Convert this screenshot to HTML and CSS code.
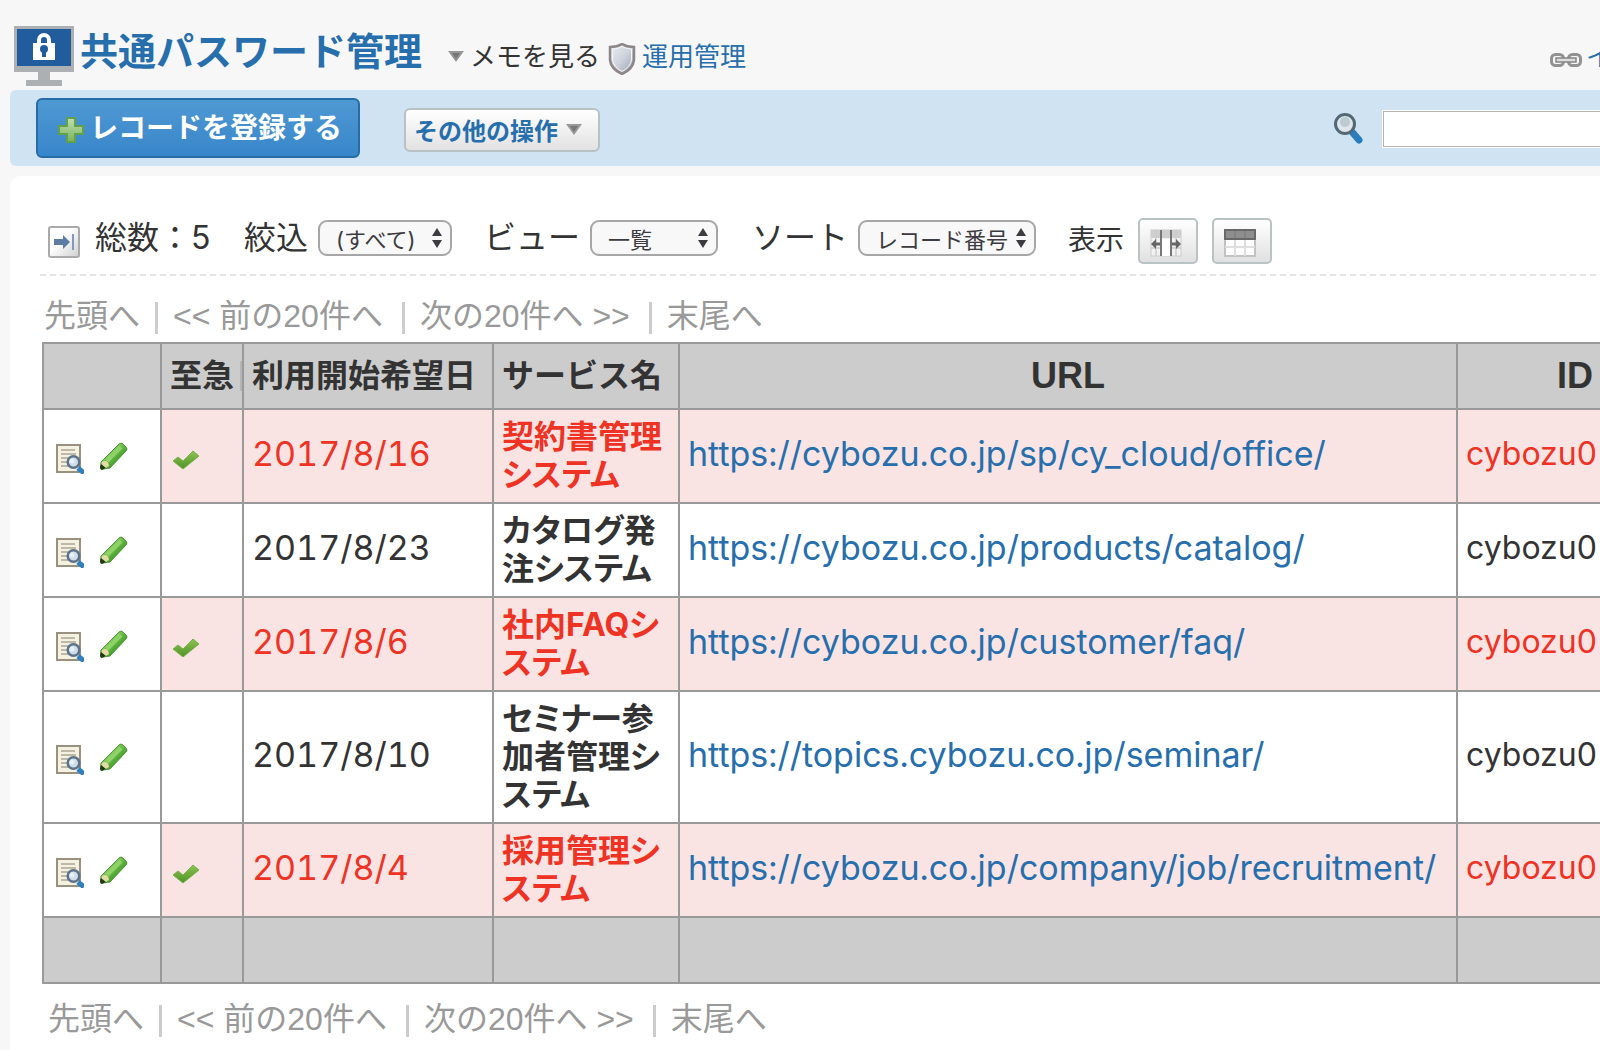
FILE: index.html
```html
<!DOCTYPE html>
<html lang="ja">
<head>
<meta charset="utf-8">
<title>共通パスワード管理</title>
<link rel="stylesheet" href="styles.css">
</head>
<body>
<svg class="defs" aria-hidden="true">
  <defs>
    <linearGradient id="g-plus" x1="0" y1="0" x2="0" y2="1"><stop offset="0" stop-color="#bfe0b0"/><stop offset="1" stop-color="#78b35c"/></linearGradient>
    <linearGradient id="g-pen" x1="0" y1="0" x2="1" y2="1"><stop offset="0.3" stop-color="#8fd465"/><stop offset="0.7" stop-color="#3c9a25"/></linearGradient>
    <linearGradient id="g-check" x1="0" y1="0" x2="0" y2="1"><stop offset="0" stop-color="#8cc152"/><stop offset="1" stop-color="#4f9426"/></linearGradient>
    <linearGradient id="g-shield" x1="0" y1="0" x2="1" y2="1"><stop offset="0" stop-color="#eceef2"/><stop offset="0.5" stop-color="#ced3dc"/><stop offset="1" stop-color="#969eac"/></linearGradient>
    <linearGradient id="g-key" x1="0" y1="0" x2="1" y2="1"><stop offset="0.4" stop-color="#ffffff"/><stop offset="1" stop-color="#cfcfcf"/></linearGradient>
  </defs>
  <symbol id="i-triangle" viewBox="0 0 16 11"><path d="M0 0H16L8 11Z" fill="#989898"/><path d="M4 2H12L8 8Z" fill="#777"/></symbol>
  <symbol id="i-updown" viewBox="0 0 10 20"><path d="M5 0L10 8H0ZM5 20L0 12H10Z" fill="#3b3b40"/></symbol>
  <symbol id="i-view" viewBox="0 0 28 30">
    <rect x="1" y="1" width="23" height="27" fill="#f5f1e1" stroke="#999080" stroke-width="2"/>
    <path d="M5 6H19M5 10H20M5 14H12M5 18H11M5 22H14" stroke="#aaa796" stroke-width="1.5"/>
    <path d="M22 24L28 29" stroke="#2f80be" stroke-width="5"/>
    <circle cx="17.500" cy="18" r="5.800" fill="#cfdcea" stroke="#5c7288" stroke-width="2.500"/>
    <circle cx="16" cy="17" r="2.500" fill="#e8f0f7"/>
  </symbol>
  <symbol id="i-pen" viewBox="0 0 28 28">
    <path d="M1 20L19 2Q21 0 23 2L26 5Q28 7 26 9L10 26L3 27Q0 26 1 20Z" fill="url(#g-pen)" stroke="#4b9a35" stroke-width="1"/>
    <path d="M7 19L21 5" stroke="#8ed268" stroke-width="4"/>
    <path d="M2 20Q8 17 9 24L4 27L1 25Z" fill="#e4dba4"/>
    <path d="M1 22L6 26L2 28Q0 28 0 25Z" fill="#1d3b12"/>
  </symbol>
  <symbol id="i-check" viewBox="0 0 28 20"><path d="M1 11L6 7L11 11L21 1L27 6L11 19Z" fill="url(#g-check)" stroke="#78b04e" stroke-width="1"/></symbol>
</svg>

<header class="header">
  <svg class="logo" viewBox="0 0 60 60" aria-hidden="true">
    <rect width="60" height="46" fill="#adb0b2"/><rect x="3" y="3" width="54" height="37" fill="#215c9c"/>
    <path d="M24 46H36V54H48V60H12V54H24Z" fill="#adb0b2"/>
    <path d="M25 18V14a5 5 0 0 1 10 0V18" fill="none" stroke="#fff" stroke-width="4"/>
    <rect x="19" y="17" width="22" height="17" fill="#fff"/>
    <circle cx="30" cy="23" r="4" fill="#215c9c"/><rect x="28" y="24" width="4" height="7" fill="#215c9c"/>
  </svg>
  <h1 class="title">共通パスワード管理</h1>
  <svg class="tri" aria-hidden="true"><use href="#i-triangle"/></svg>
  <a class="memo" href="#">メモを見る</a>
  <svg class="shield" viewBox="0 0 28 32" aria-hidden="true"><path d="M2 4Q9 4 14 1Q19 4 26 4V17Q25 26 14 31Q3 26 2 17Z" fill="url(#g-shield)" stroke="#8d8788" stroke-width="2.500"/><path d="M4.500 6Q10 6 14 3.500Q18 6 23.500 6V17Q22 24 14 28.500Q6 24 4.500 17Z" fill="none" stroke="#f4f5f7" stroke-width="1"/></svg>
  <a class="admin" href="#">運用管理</a>
  <a class="import" href="#"><svg class="chain" viewBox="0 0 32 14" aria-hidden="true"><rect x="1.500" y="1.500" width="12" height="11" rx="4" fill="none" stroke="#929292" stroke-width="3"/><rect x="18.500" y="1.500" width="12" height="11" rx="4" fill="none" stroke="#929292" stroke-width="3"/><rect x="6" y="5" width="20" height="4" fill="#ddd" stroke="#858585" stroke-width="1.500"/></svg>イ</a>
</header>

<div class="toolbar">
  <button class="add" type="button"><svg class="plus" viewBox="0 0 26 26" aria-hidden="true"><path d="M9 1H17V9H25V17H17V25H9V17H1V9H9Z" fill="url(#g-plus)" stroke="#62a04a" stroke-width="2"/></svg>レコードを登録する</button>
  <button class="other" type="button">その他の操作<svg class="tri" aria-hidden="true"><use href="#i-triangle"/></svg></button>
  <label class="search" for="q"><svg class="lens" viewBox="0 0 30 32" aria-hidden="true"><path d="M19 20L25 27" stroke="#2b7cbd" stroke-width="7" stroke-linecap="round"/><circle cx="11" cy="11" r="9.500" fill="#dfe6ea" stroke="#526876" stroke-width="3"/><circle cx="11" cy="9" r="5" fill="#bccad2"/></svg></label>
  <input class="query" id="q" type="text" aria-label="検索">
</div>

<main class="panel">
  <div class="filters">
    <svg class="collapse" viewBox="0 0 32 32" aria-hidden="true"><rect x="1" y="1" width="30" height="30" rx="2" fill="url(#g-key)" stroke="#aaa" stroke-width="2"/><path d="M6 13H15V9L22 16L15 23V19H6Z" fill="#5c7ba5"/><path d="M25 8V24" stroke="#8199ba" stroke-width="2"/></svg>
    <span class="total">総数：5</span>
    <label for="narrow">絞込</label>
    <span class="pick narrow"><select id="narrow"><option>(すべて)</option></select><svg aria-hidden="true"><use href="#i-updown"/></svg></span>
    <label for="view">ビュー</label>
    <span class="pick view"><select id="view"><option>一覧</option></select><svg aria-hidden="true"><use href="#i-updown"/></svg></span>
    <label for="sort">ソート</label>
    <span class="pick sort"><select id="sort"><option>レコード番号</option></select><svg aria-hidden="true"><use href="#i-updown"/></svg></span>
    <span class="show">表示</span>
    <button class="tool" type="button" aria-label="列幅"><svg viewBox="0 0 32 28" aria-hidden="true"><rect x="1" y="1" width="30" height="26" fill="#f2f2f2" stroke="#ccc"/><path d="M1 1H31V9H1Z" fill="#cfcfcf"/><path d="M1 19H31M6 1V27M26 1V27" stroke="#ccc" stroke-width="1.500"/><rect x="12" y="10" width="9" height="17" fill="#fff"/><path d="M11 1V27M21 1V27" stroke="#777" stroke-width="2"/><path d="M10 15H6M22 15H26" stroke="#666" stroke-width="3"/><path d="M6 10V20L1 15ZM26 10V20L31 15Z" fill="#666"/></svg></button>
    <button class="tool" type="button" aria-label="表"><svg viewBox="0 0 32 28" aria-hidden="true"><rect x="1" y="1" width="30" height="26" fill="#fff" stroke="#c2c2c2" stroke-width="2"/><path d="M11 10V27M21 10V27M1 18H31" stroke="#dedede" stroke-width="2"/><rect x="1" y="1" width="30" height="9" fill="#8e8e8e" stroke="#686868" stroke-width="2"/><path d="M11 2V9M21 2V9" stroke="#777"/></svg></button>
  </div>

  <nav class="pager"><span>先頭へ</span><span class="step">&lt;&lt; 前の20件へ</span><span class="step">次の20件へ &gt;&gt;</span><span>末尾へ</span></nav>

  <table class="records">
    <colgroup><col class="c-act"><col class="c-urg"><col class="c-date"><col class="c-name"><col class="c-url"><col class="c-id"></colgroup>
    <thead>
      <tr><th></th><th class="urgent-head">至急</th><th class="left">利用開始希望日</th><th class="left">サービス名</th><th class="latin">URL</th><th class="latin">ID</th></tr>
    </thead>
    <tbody>
      <tr class="hot">
        <td class="act"><a href="#" aria-label="詳細"><svg class="doc"><use href="#i-view"/></svg></a><a href="#" aria-label="編集"><svg class="pen"><use href="#i-pen"/></svg></a></td>
        <td><svg class="check"><use href="#i-check"/></svg></td><td class="wide">2017/8/16</td><td class="name">契約書管理システム</td>
        <td class="wide"><a href="#">https://cybozu.co.jp/sp/cy_cloud/office/</a></td><td>cybozu0</td>
      </tr>
      <tr>
        <td class="act"><a href="#" aria-label="詳細"><svg class="doc"><use href="#i-view"/></svg></a><a href="#" aria-label="編集"><svg class="pen"><use href="#i-pen"/></svg></a></td>
        <td></td><td class="wide">2017/8/23</td><td class="name">カタログ発注システム</td>
        <td class="wide"><a href="#">https://cybozu.co.jp/products/catalog/</a></td><td>cybozu0</td>
      </tr>
      <tr class="hot">
        <td class="act"><a href="#" aria-label="詳細"><svg class="doc"><use href="#i-view"/></svg></a><a href="#" aria-label="編集"><svg class="pen"><use href="#i-pen"/></svg></a></td>
        <td><svg class="check"><use href="#i-check"/></svg></td><td class="wide">2017/8/6</td><td class="name">社内FAQシステム</td>
        <td class="wide"><a href="#">https://cybozu.co.jp/customer/faq/</a></td><td>cybozu0</td>
      </tr>
      <tr>
        <td class="act"><a href="#" aria-label="詳細"><svg class="doc"><use href="#i-view"/></svg></a><a href="#" aria-label="編集"><svg class="pen"><use href="#i-pen"/></svg></a></td>
        <td></td><td class="wide">2017/8/10</td><td class="name">セミナー参加者管理システム</td>
        <td class="wide"><a href="#">https://topics.cybozu.co.jp/seminar/</a></td><td>cybozu0</td>
      </tr>
      <tr class="hot">
        <td class="act"><a href="#" aria-label="詳細"><svg class="doc"><use href="#i-view"/></svg></a><a href="#" aria-label="編集"><svg class="pen"><use href="#i-pen"/></svg></a></td>
        <td><svg class="check"><use href="#i-check"/></svg></td><td class="wide">2017/8/4</td><td class="name">採用管理システム</td>
        <td class="wide"><a href="#">https://cybozu.co.jp/company/job/recruitment/</a></td><td>cybozu0</td>
      </tr>
    </tbody>
    <tfoot><tr><td></td><td></td><td></td><td></td><td></td><td></td></tr></tfoot>
  </table>

  <nav class="pager bottom"><span>先頭へ</span><span class="step">&lt;&lt; 前の20件へ</span><span class="step">次の20件へ &gt;&gt;</span><span>末尾へ</span></nav>
</main>
</body>
</html>
```
FILE: styles.css
```css
* { box-sizing: border-box; }
body {
  margin: 0;
  background: #f7f7f7;
  color: #333;
  font-family: Inter, "Noto Sans CJK JP", sans-serif;
  font-size: 32px;
  line-height: 38px;
  overflow: hidden;
}
a { color: #266eac; text-decoration: none; }
svg { display: block; flex: none; }
button { font-family: inherit; cursor: pointer; }
.defs { position: absolute; width: 0; height: 0; }

.header {
  display: flex;
  align-items: center;
  height: 90px;
  padding: 22px 0 0 14px;
  font-size: 26px;
  white-space: nowrap;
}
.logo { width: 60px; height: 60px; }
.title { margin: 0 26px 10px 6px; font-size: 38px; line-height: 52px; color: #266eac; }
.tri { width: 16px; height: 11px; }
.memo { margin: 2px 8px 0 6px; color: #333; }
.shield { width: 28px; height: 32px; margin-top: 6px; }
.admin { margin: 2px 0 0 6px; }
.import { display: flex; align-items: center; gap: 4px; width: 50px; margin: 2px 0 0 auto; overflow: hidden; }
.chain { width: 32px; height: 14px; margin-top: 6px; }

.toolbar {
  display: flex;
  align-items: center;
  height: 76px;
  margin-left: 10px;
  padding-left: 26px;
  background: #cfe3f3;
  border-radius: 6px 0 0 6px;
}
.add {
  display: flex;
  align-items: center;
  gap: 6px;
  width: 324px;
  height: 60px;
  padding: 0 0 4px 20px;
  border: 2px solid #266ca6;
  border-radius: 6px;
  background: linear-gradient(#4f99d3, #3886ca);
  color: #fff;
  font-size: 28px;
  font-weight: 700;
  white-space: nowrap;
}
.plus { width: 26px; height: 26px; margin-top: 8px; }
.other {
  display: flex;
  align-items: center;
  gap: 8px;
  width: 196px;
  height: 44px;
  margin: 4px 0 0 44px;
  padding: 0 0 2px 8px;
  border: 2px solid #b9c1c2;
  border-radius: 6px;
  background: linear-gradient(#fff, #e2e2e2);
  color: #266eac;
  font-size: 24px;
  font-weight: 700;
  white-space: nowrap;
}
.search { margin-left: auto; }
.lens { width: 30px; height: 32px; margin-top: 2px; }
.query {
  width: 260px;
  height: 38px;
  margin: 2px -42px 0 18px;
  padding: 0 8px;
  border: 1px solid #fff;
  background: #fff;
  box-shadow: inset 0 0 0 1px #b5b5b5;
  font-size: 24px;
}

.panel {
  margin: 10px 0 0 10px;
  padding: 30px 0 20px 30px;
  background: #fff;
  border-radius: 10px 0 0 0;
}
.filters {
  display: flex;
  align-items: center;
  height: 70px;
  padding: 0 0 6px 8px;
  background: repeating-linear-gradient(90deg, #e5e5e5 0 6px, transparent 6px 10px) left bottom / 100% 2px no-repeat;
  white-space: nowrap;
}
.collapse { width: 32px; height: 32px; margin-top: 8px; }
.total { width: 149px; margin-left: 15px; }
.pick { display: grid; align-items: center; height: 36px; margin-left: 10px; }
.pick > * { grid-area: 1 / 1; }
.pick select {
  width: 100%;
  height: 36px;
  padding: 4px 0 0 16px;
  border: 2px solid #a6a6a6;
  border-radius: 9px;
  background: #f8f8f8;
  color: #3b3b40;
  font-family: inherit;
  font-size: 22px;
  appearance: none;
}
.pick svg { width: 10px; height: 20px; margin-right: 10px; justify-self: end; pointer-events: none; }
.narrow { width: 134px; margin-right: 32px; }
.view { width: 128px; margin-right: 34px; }
.sort { width: 178px; }
.show { margin: 4px 14px 0 32px; font-size: 28px; }
.tool {
  display: grid;
  place-items: center;
  width: 60px;
  height: 46px;
  margin: 6px 14px 0 0;
  padding: 4px 4px 0 0;
  border: 2px solid #b9c3c4;
  border-radius: 5px;
  background: linear-gradient(#fff, #e0e0e0);
}
.tool svg { width: 32px; height: 28px; }

.pager {
  display: flex;
  align-items: center;
  height: 66px;
  padding: 14px 0 0 4px;
  color: #999;
  font-family: "Liberation Sans", "Noto Sans CJK JP", sans-serif;
  white-space: nowrap;
}
.pager span { display: flex; align-items: center; white-space: pre; }
.pager .step { padding-right: 4px; }
.pager span + span::before { content: ""; width: 3px; height: 32px; margin: 4px 15px 0; background: #ccc; }
.pager.bottom { padding: 4px 0 0 8px; }

.records { width: 1650px; margin-left: 2px; border-collapse: collapse; table-layout: fixed; }
.c-act { width: 118px; }
.c-urg { width: 82px; }
.c-date { width: 250px; }
.c-name { width: 186px; }
.c-url { width: 778px; }
.c-id { width: 236px; }
.records th, .records td { padding: 8px 8px; border: 2px solid #999; text-align: left; white-space: nowrap; }
.records th { height: 66px; background: #ccc; text-align: center; }
.records th.left { text-align: left; }
.records th.latin { font-family: "Liberation Sans", sans-serif; font-size: 36px; }
.records th.urgent-head { background: linear-gradient(#b5b5b5, #b5b5b5) right center / 2px 30px no-repeat #ccc; }
.records tfoot td { height: 66px; background: #ccc; }
.records tbody td { padding: 6px 8px 10px; }
.records tbody .wide { font-size: 34px; font-variant-numeric: tabular-nums; }
.records tbody .name { padding: 8px; font-weight: 700; white-space: normal; font-feature-settings: "palt"; }
.records .hot td { background: #f9e4e3; color: #ee3224; }
.records .hot .act { background: #fff; }
.records .act a { display: inline-block; margin: 0 16px 0 4px; vertical-align: middle; }
.records .act a + a { margin: 0; }
.doc { width: 28px; height: 30px; margin-top: 6px; }
.pen { width: 28px; height: 28px; }
.check { width: 28px; height: 20px; margin: 12px 0 0 2px; }
```
